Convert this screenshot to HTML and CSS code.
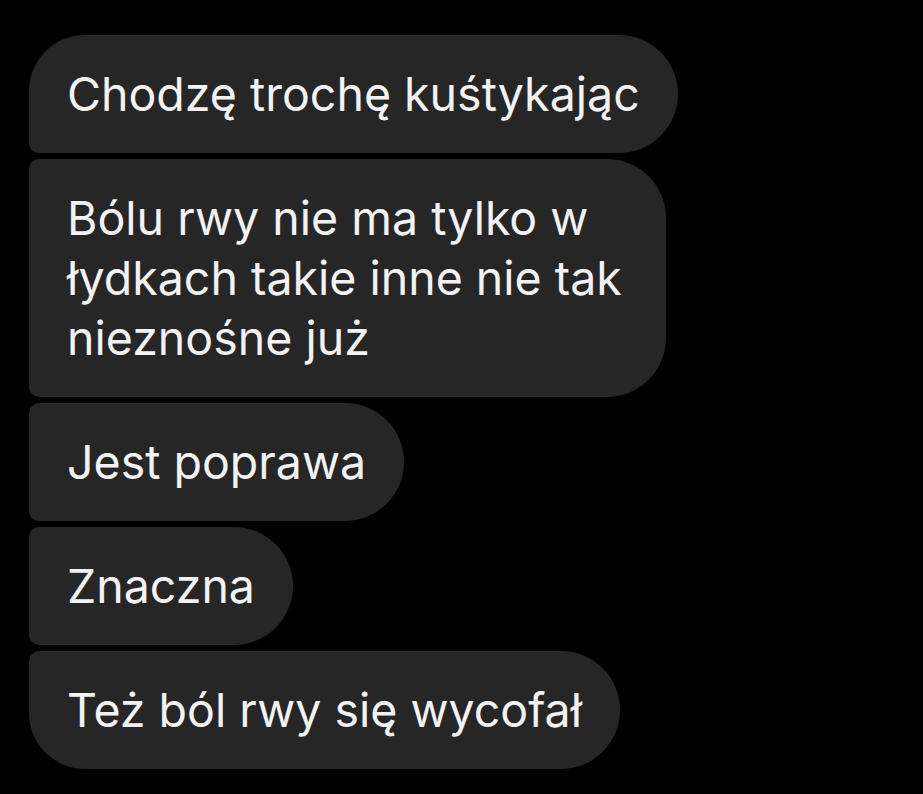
FILE: index.html
```html
<!DOCTYPE html>
<html lang="pl">
<head>
<meta charset="utf-8">
<link rel="stylesheet" href="styles.css">
</head>
<body>
<div class="thread">
  <div class="bubble first">Chodzę trochę kuśtykając</div>
  <div class="bubble multi">Bólu rwy nie ma tylko w łydkach takie inne nie tak nieznośne już</div>
  <div class="bubble">Jest poprawa</div>
  <div class="bubble">Znaczna</div>
  <div class="bubble last">Też ból rwy się wycofał</div>
</div>
</body>
</html>
```
FILE: styles.css
```css
html, body {
  margin: 0;
  padding: 0;
  background: #000;
}
body {
  width: 923px;
  height: 794px;
  overflow: hidden;
  font-family: Inter, Roboto, sans-serif;
}
.thread {
  display: flex;
  flex-direction: column;
  align-items: flex-start;
  gap: 6px;
  padding: 35px 0 0 29px;
}
.bubble {
  box-sizing: border-box;
  max-width: 665px;
  background: #262626;
  color: #f2f2f2;
  font-size: 46.5px;
  line-height: 60px;
  padding: 29px 38px 29px 38px;
  border-radius: 10px 59px 59px 10px;
  white-space: nowrap;
}
.bubble.multi {
  max-width: 637px;
  white-space: normal;
}
.bubble.first {
  border-top-left-radius: 56px;
}
.bubble.last {
  border-bottom-left-radius: 56px;
}
```
